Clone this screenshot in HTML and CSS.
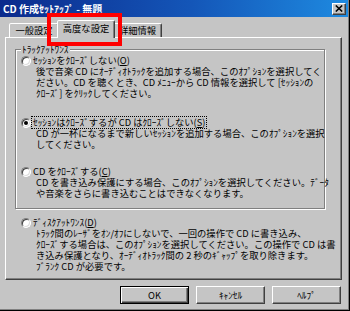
FILE: index.html
```html
<!DOCTYPE html>
<html lang="ja">
<head>
<meta charset="utf-8">
<title>CD 作成ｾｯﾄｱｯﾌﾟ - 無題</title>
<link rel="stylesheet" href="styles.css">
</head>
<body>
<div class="window">
  <div class="titlebar">
    <span class="title">CD 作成ｾｯﾄｱｯﾌﾟ - 無題</span>
    <span class="close"><svg width="8" height="7" viewBox="0 0 8 7"><path d="M0.8 0.5 L7.2 6.5 M7.2 0.5 L0.8 6.5" stroke="#000" stroke-width="1.6" fill="none"/></svg></span>
  </div>
  <div class="tabs">
    <div class="tab tab-general">一般設定</div>
    <div class="tab tab-active">高度な設定</div>
    <div class="tab tab-detail">詳細情報</div>
  </div>
  <div class="panel">
    <fieldset class="group">
      <legend class="legend">ﾄﾗｯｸｱｯﾄﾜﾝｽ</legend>
      <div class="option">
        <div class="row"><span class="radio"></span><span class="label">ｾｯｼｮﾝをｸﾛｰｽﾞしない(<u>O</u>)</span></div>
        <p class="desc">後で音楽 CD にｵｰﾃﾞｨｵﾄﾗｯｸを追加する場合、このｵﾌﾟｼｮﾝを選択してく<br>ださい。CD を聴くとき、CD ﾒﾆｭｰから CD 情報を選択して [ｾｯｼｮﾝの<br>ｸﾛｰｽﾞ] をｸﾘｯｸしてください。</p>
      </div>
      <div class="option option-2">
        <div class="row"><span class="radio checked"></span><span class="label focus">ｾｯｼｮﾝはｸﾛｰｽﾞするが CD はｸﾛｰｽﾞしない(<u>S</u>)</span></div>
        <p class="desc">CD が一杯になるまで新しいｾｯｼｮﾝを追加する場合、このｵﾌﾟｼｮﾝを選択<br>してください。</p>
      </div>
      <div class="option option-3">
        <div class="row"><span class="radio"></span><span class="label">CD をｸﾛｰｽﾞする(<u>C</u>)</span></div>
        <p class="desc">CD を書き込み保護にする場合、このｵﾌﾟｼｮﾝを選択してください。ﾃﾞｰﾀ<br>や音楽をさらに書き込むことはできなくなります。</p>
      </div>
    </fieldset>
    <div class="option option-outside">
      <div class="row"><span class="radio"></span><span class="label">ﾃﾞｨｽｸｱｯﾄﾜﾝｽ(<u>D</u>)</span></div>
      <p class="desc">ﾄﾗｯｸ間のﾚｰｻﾞをｵﾝ/ｵﾌにしないで、一回の操作で CD に書き込み、<br>ｸﾛｰｽﾞする場合は、このｵﾌﾟｼｮﾝを選択してください。この操作で CD は書<br>き込み保護となり、ｵｰﾃﾞｨｵﾄﾗｯｸ間の 2 秒のｷﾞｬｯﾌﾟを取り除きます。<br>ﾌﾞﾗﾝｸ CD が必要です。</p>
    </div>
  </div>
  <div class="buttons">
    <button class="btn btn-default">OK</button>
    <button class="btn">ｷｬﾝｾﾙ</button>
    <button class="btn">ﾍﾙﾌﾟ</button>
  </div>
  <div class="highlight"></div>
</div>
</body>
</html>
```

FILE: styles.css
```css
* { box-sizing: border-box; }
html, body { margin: 0; padding: 0; }
body {
  width: 350px;
  height: 311px;
  overflow: hidden;
  background: #c5c5c5;
  font-family: "Noto Sans CJK JP", "Noto Sans", sans-serif;
  font-size: 9.3px;
  line-height: 11px;
  color: #000;
}
.window {
  position: relative;
  width: 350px;
  height: 311px;
  background: #c5c5c5;
  border-right: 1px solid #000;
  border-bottom: 1px solid #000;
  box-shadow: inset -1px -1px 0 #808080;
}
.titlebar {
  height: 17px;
  margin-right: 1px;
  background: linear-gradient(90deg, #0b2a8c 0%, #1456b8 55%, #1e8ae0 100%);
  display: flex;
  align-items: center;
  justify-content: space-between;
  padding: 0 2px 0 3px;
}
.title {
  color: #fff;
  font-size: 10px;
  font-weight: bold;
  white-space: nowrap;
}
.close {
  width: 14px;
  height: 12px;
  background: #c5c5c5;
  border: 1px solid;
  border-color: #fff #404040 #404040 #fff;
  box-shadow: inset -1px -1px 0 #808080;
  display: flex;
  align-items: center;
  justify-content: center;
}
.close svg { display: block; }
.tabs {
  display: flex;
  align-items: flex-end;
  height: 20px;
  padding-left: 9px;
}
.tab {
  height: 14px;
  border: 1px solid;
  border-bottom: none;
  border-color: #fff #404040 transparent #fff;
  border-radius: 2px 2px 0 0;
  box-shadow: inset -1px 0 0 #808080;
  display: flex;
  align-items: center;
  justify-content: center;
  white-space: nowrap;
  background: #c5c5c5;
}
.tab-general { width: 50px; }
.tab-active {
  width: 58px;
  height: 18px;
  margin: 0 0 -1px -2px;
  position: relative;
  z-index: 1;
  padding-bottom: 2px;
}
.tab-detail { width: 49px; margin-left: -2px; }
.panel {
  margin-left: 5px;
  width: 337px;
  height: 243px;
  border: 1px solid;
  border-color: #fff #404040 #404040 #fff;
  box-shadow: inset -1px -1px 0 #808080;
  padding: 0 0 0 9px;
}
.group {
  margin: 6px 0 0 0;
  width: 310px;
  height: 165px;
  padding: 0 0 0 5px;
  border: 1px solid #808080;
  box-shadow: 1px 1px 0 #fff, inset 1px 1px 0 #fff;
  min-width: 0;
}
.legend {
  padding: 0 1px;
  margin: 0;
  line-height: 11px;
  background: #c5c5c5;
  white-space: nowrap;
}
.row {
  display: flex;
  align-items: center;
  height: 11px;
  white-space: nowrap;
}
.radio {
  flex: none;
  width: 10px;
  height: 10px;
  border-radius: 50%;
  background: #fff;
  border: 1px solid;
  border-color: #808080 #fff #fff #808080;
  box-shadow: inset 1px 1px 0 #404040, inset -1px -1px 0 #dcdcdc;
  display: flex;
  align-items: center;
  justify-content: center;
}
.radio.checked::after {
  content: "";
  width: 4px;
  height: 4px;
  border-radius: 50%;
  background: #000;
}
.label { margin-left: 2px; }
.focus {
  outline: 1px dotted #000;
  outline-offset: 0;
  padding: 0 1px;
  margin-left: 1px;
}
.desc {
  margin: 0 0 0 15px;
  white-space: nowrap;
}
.option-2 { margin-top: 18px; }
.option-3 { margin-top: 16px; }
.option-outside { margin: 8px 0 0 6px; }
.buttons {
  display: flex;
  justify-content: flex-end;
  gap: 7px;
  margin-top: 6px;
  padding-right: 8px;
}
.btn {
  width: 69px;
  height: 18px;
  padding: 0;
  font: inherit;
  color: #000;
  background: #c5c5c5;
  border: 1px solid;
  border-color: #fff #404040 #404040 #fff;
  box-shadow: inset -1px -1px 0 #808080;
}
.btn-default {
  border: 1px solid #000;
  box-shadow: inset 1px 1px 0 #fff, inset -1px -1px 0 #404040, inset -2px -2px 0 #808080;
}
.highlight {
  position: absolute;
  left: 47px;
  top: 13px;
  width: 75px;
  height: 33px;
  border: 4px solid #f00;
  pointer-events: none;
}
```
